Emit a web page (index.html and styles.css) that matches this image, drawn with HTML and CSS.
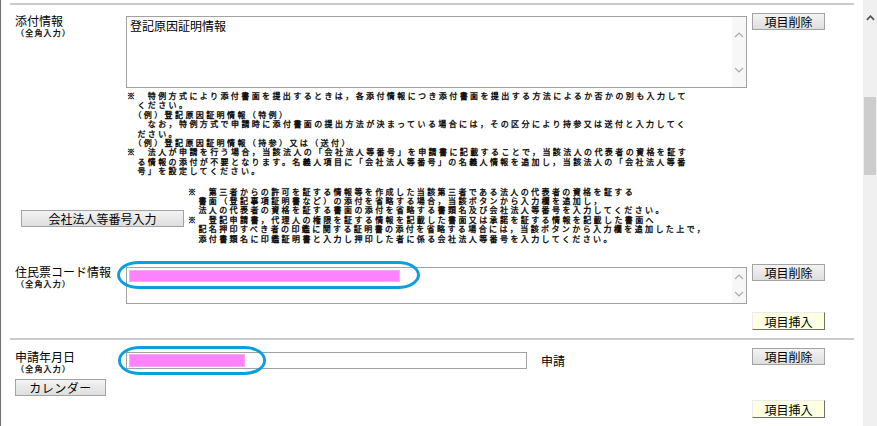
FILE: index.html
```
<!DOCTYPE html>
<html lang="ja">
<head>
<meta charset="utf-8">
<title>申請書入力</title>
<link rel="stylesheet" href="styles.css">
</head>
<body>
<div class="page">
  <div class="main">
    <div class="sep"></div>

    <div class="field f1">
      <div class="label-cell">
        <div class="label">添付情報</div>
        <div class="sublabel">（全角入力）</div>
      </div>
      <div class="content-cell">
        <div class="textbox tb-tall">
          <div class="textbox-text">登記原因証明情報</div>
          <div class="fake-scroll">
            <svg class="chev" viewBox="0 0 10 6"><polyline points="1,5 5,1 9,5"/></svg>
            <svg class="chev" viewBox="0 0 10 6"><polyline points="1,1 5,5 9,1"/></svg>
          </div>
        </div>
        <div class="notes notes1">
          <div>※　特例方式により添付書面を提出するときは，各添付情報につき添付書面を提出する方法によるか否かの別も入力して</div>
          <div>　ください。</div>
          <div>　（例）登記原因証明情報（特例）</div>
          <div>　　なお，特例方式で申請時に添付書面の提出方法が決まっている場合には，その区分により持参又は送付と入力してく</div>
          <div>　ださい。</div>
          <div>　（例）登記原因証明情報（持参）又は（送付）</div>
          <div>※　法人が申請を行う場合，当該法人の「会社法人等番号」を申請書に記載することで，当該法人の代表者の資格を証す</div>
          <div>　る情報の添付が不要となります。名義人項目に「会社法人等番号」の名義人情報を追加し，当該法人の「会社法人等番</div>
          <div>　号」を設定してください。</div>
        </div>
      </div>
      <div class="btn-cell">
        <button class="btn btn-del">項目削除</button>
      </div>
    </div>

    <div class="company-row">
      <button class="btn btn-company">会社法人等番号入力</button>
      <div class="notes notes2">
        <div>※　第三者からの許可を証する情報等を作成した当該第三者である法人の代表者の資格を証する</div>
        <div>　書面（登記事項証明書など）の添付を省略する場合，当該ボタンから入力欄を追加し，</div>
        <div>　法人の代表者の資格を証する書面の添付を省略する書類名及び会社法人等番号を入力してください。</div>
        <div>※　登記申請書，代理人の権限を証する情報を記載した書面又は承諾を証する情報を記載した書面へ</div>
        <div>　記名押印すべき者の印鑑に関する証明書の添付を省略する場合には，当該ボタンから入力欄を追加した上で，</div>
        <div>　添付書類名に印鑑証明書と入力し押印した者に係る会社法人等番号を入力してください。</div>
      </div>
    </div>

    <div class="field f2">
      <div class="label-cell">
        <div class="label">住民票コード情報</div>
        <div class="sublabel">（全角入力）</div>
      </div>
      <div class="content-cell">
        <div class="textbox tb-short">
          <div class="textbox-text"><span class="redact redact-long"></span></div>
          <div class="fake-scroll">
            <svg class="chev" viewBox="0 0 10 6"><polyline points="1,5 5,1 9,5"/></svg>
            <svg class="chev" viewBox="0 0 10 6"><polyline points="1,1 5,5 9,1"/></svg>
          </div>
        </div>
        <div class="mark mark-long"></div>
      </div>
      <div class="btn-cell">
        <button class="btn btn-del">項目削除</button>
        <button class="btn btn-ins">項目挿入</button>
      </div>
    </div>

    <div class="sep sep2"></div>

    <div class="field f3">
      <div class="label-cell">
        <div class="label">申請年月日</div>
        <div class="sublabel">（全角入力）</div>
        <button class="btn btn-cal">カレンダー</button>
      </div>
      <div class="content-cell">
        <div class="date-line">
          <div class="input"><span class="redact redact-short"></span></div>
          <span class="suffix">申請</span>
        </div>
        <div class="mark mark-short"></div>
      </div>
      <div class="btn-cell">
        <button class="btn btn-del">項目削除</button>
        <button class="btn btn-ins btn-ins3">項目挿入</button>
      </div>
    </div>
  </div>

  <div class="vscroll">
    <div class="vs-up">
      <svg class="vs-chev" viewBox="0 0 10 6"><polyline points="1,5 5,1 9,5"/></svg>
    </div>
    <div class="vs-thumb"></div>
  </div>
</div>
</body>
</html>
```

FILE: styles.css
```
html, body {
  margin: 0;
  padding: 0;
  background: #fff;
}

body {
  font-family: "Noto Sans CJK JP", "Noto Sans", sans-serif;
  color: #000;
  overflow: hidden;
}

.page {
  display: flex;
  width: 877px;
  height: 426px;
  overflow: hidden;
}

.main {
  flex: 1;
  box-sizing: border-box;
  border-left: 1px solid #6f6f6f;
  padding: 3px 9px 0 9px;
  overflow: hidden;
}

.sep {
  height: 0;
  border-top: 2px solid #cbcbcb;
}

.sep2 {
  margin-top: 8px;
}

.field {
  display: grid;
  grid-template-columns: 116px 621px 1fr;
  padding-top: 8px;
}

.label-cell {
  padding-left: 5px;
}

.label {
  font-family: "Liberation Sans", "Noto Sans CJK JP", sans-serif;
  font-size: 12px;
  line-height: 14px;
  margin-top: 2px;
  white-space: nowrap;
}

.f3 .label {
  margin-top: 3px;
}

.sublabel {
  font-family: "Liberation Sans", "Noto Sans CJK JP", sans-serif;
  font-size: 8px;
  line-height: 9px;
  letter-spacing: 1.2px;
  padding-left: 1px;
  white-space: nowrap;
  -webkit-text-stroke: 0.25px #000;
}

.content-cell {
  position: relative;
}

.btn-cell {
  padding-left: 5px;
  display: flex;
  flex-direction: column;
  align-items: flex-start;
}

.btn {
  font-family: "Noto Sans CJK JP", "Noto Sans", sans-serif;
  font-size: 12px;
  line-height: 15px;
  height: 17px;
  padding: 0;
  margin: 0;
  color: #000;
  box-sizing: border-box;
  border: 1px solid #a3a3a3;
  background: linear-gradient(#f3f3f3, #dedede);
  border-radius: 0;
  white-space: nowrap;
}

.btn-del {
  width: 73px;
}

.btn-ins {
  width: 73px;
  height: 18px;
  margin-top: 31px;
  background: #ffffe1;
  border-color: #ececec #6f6f6f #6f6f6f #ececec;
}

.btn-ins3 {
  margin-top: 35px;
}

.btn-cal {
  width: 91px;
  margin-top: 1px;
  letter-spacing: 0.5px;
}

.btn-company {
  width: 163px;
  margin-top: 22px;
  flex: none;
}

/* fake textareas */
.textbox {
  display: flex;
  box-sizing: border-box;
  width: 621px;
  margin-top: 3px;
  border: 1px solid #a2a2a2;
  background: #fff;
}

.tb-tall {
  height: 72px;
}

.tb-short {
  height: 37px;
}

.textbox-text {
  flex: 1;
  padding: 2px 3px;
  font-size: 12px;
  line-height: 14px;
}

.tb-short .textbox-text {
  padding: 2px 2px;
}

.fake-scroll {
  width: 14px;
  background: #f7f7f7;
  display: flex;
  flex-direction: column;
  justify-content: space-around;
  align-items: center;
}

.chev {
  width: 10px;
  height: 6px;
  display: block;
}

.chev polyline {
  fill: none;
  stroke: #ababab;
  stroke-width: 1.2;
}

.redact {
  display: block;
  background: #fd82fd;
  box-shadow: inset 0 0 0 1px #fba6fb;
}

.redact-long {
  width: 271px;
  height: 12px;
}

.redact-short {
  width: 116px;
  height: 13px;
}

/* notes */
.notes {
  font-family: "Liberation Sans", "Noto Sans CJK JP", sans-serif;
  font-size: 8px;
  line-height: 9.4px;
  letter-spacing: 2.4px;
  white-space: nowrap;
  color: #000;
  -webkit-text-stroke: 0.3px #000;
}

.notes1 {
  margin-top: 4px;
  margin-left: 1px;
}

.company-row {
  display: flex;
  align-items: flex-start;
  margin-top: 11px;
  padding-left: 11px;
}

.notes2 {
  margin-left: 4px;
}

.f2 {
  margin-top: 20px;
  padding-top: 0;
}

/* date */
.date-line {
  display: flex;
  align-items: center;
  margin-top: 4px;
}

.input {
  box-sizing: border-box;
  width: 401px;
  height: 17px;
  border: 1px solid #a2a2a2;
  padding: 1px 2px;
  background: #fff;
}

.suffix {
  margin-left: 14px;
  font-size: 12px;
  line-height: 14px;
}

/* annotation marks */
.mark {
  position: absolute;
  box-sizing: border-box;
  border: 3px solid #0c9fe0;
  border-radius: 22px / 14px;
}

.mark-long {
  left: -9px;
  top: -3px;
  width: 303px;
  height: 28px;
}

.mark-short {
  left: -8px;
  top: -2px;
  width: 148px;
  height: 29px;
}

/* page scrollbar */
.vscroll {
  width: 14px;
  flex: none;
  background: #f0f0f0;
  display: flex;
  flex-direction: column;
}

.vs-up {
  height: 36px;
  display: flex;
  align-items: center;
  justify-content: center;
}

.vs-chev {
  width: 9px;
  height: 6px;
  display: block;
}

.vs-chev polyline {
  fill: none;
  stroke: #555;
  stroke-width: 2;
}

.vs-thumb {
  margin: 61px 1px 0 1px;
  height: 78px;
  background: #cdcdcd;
}
```
